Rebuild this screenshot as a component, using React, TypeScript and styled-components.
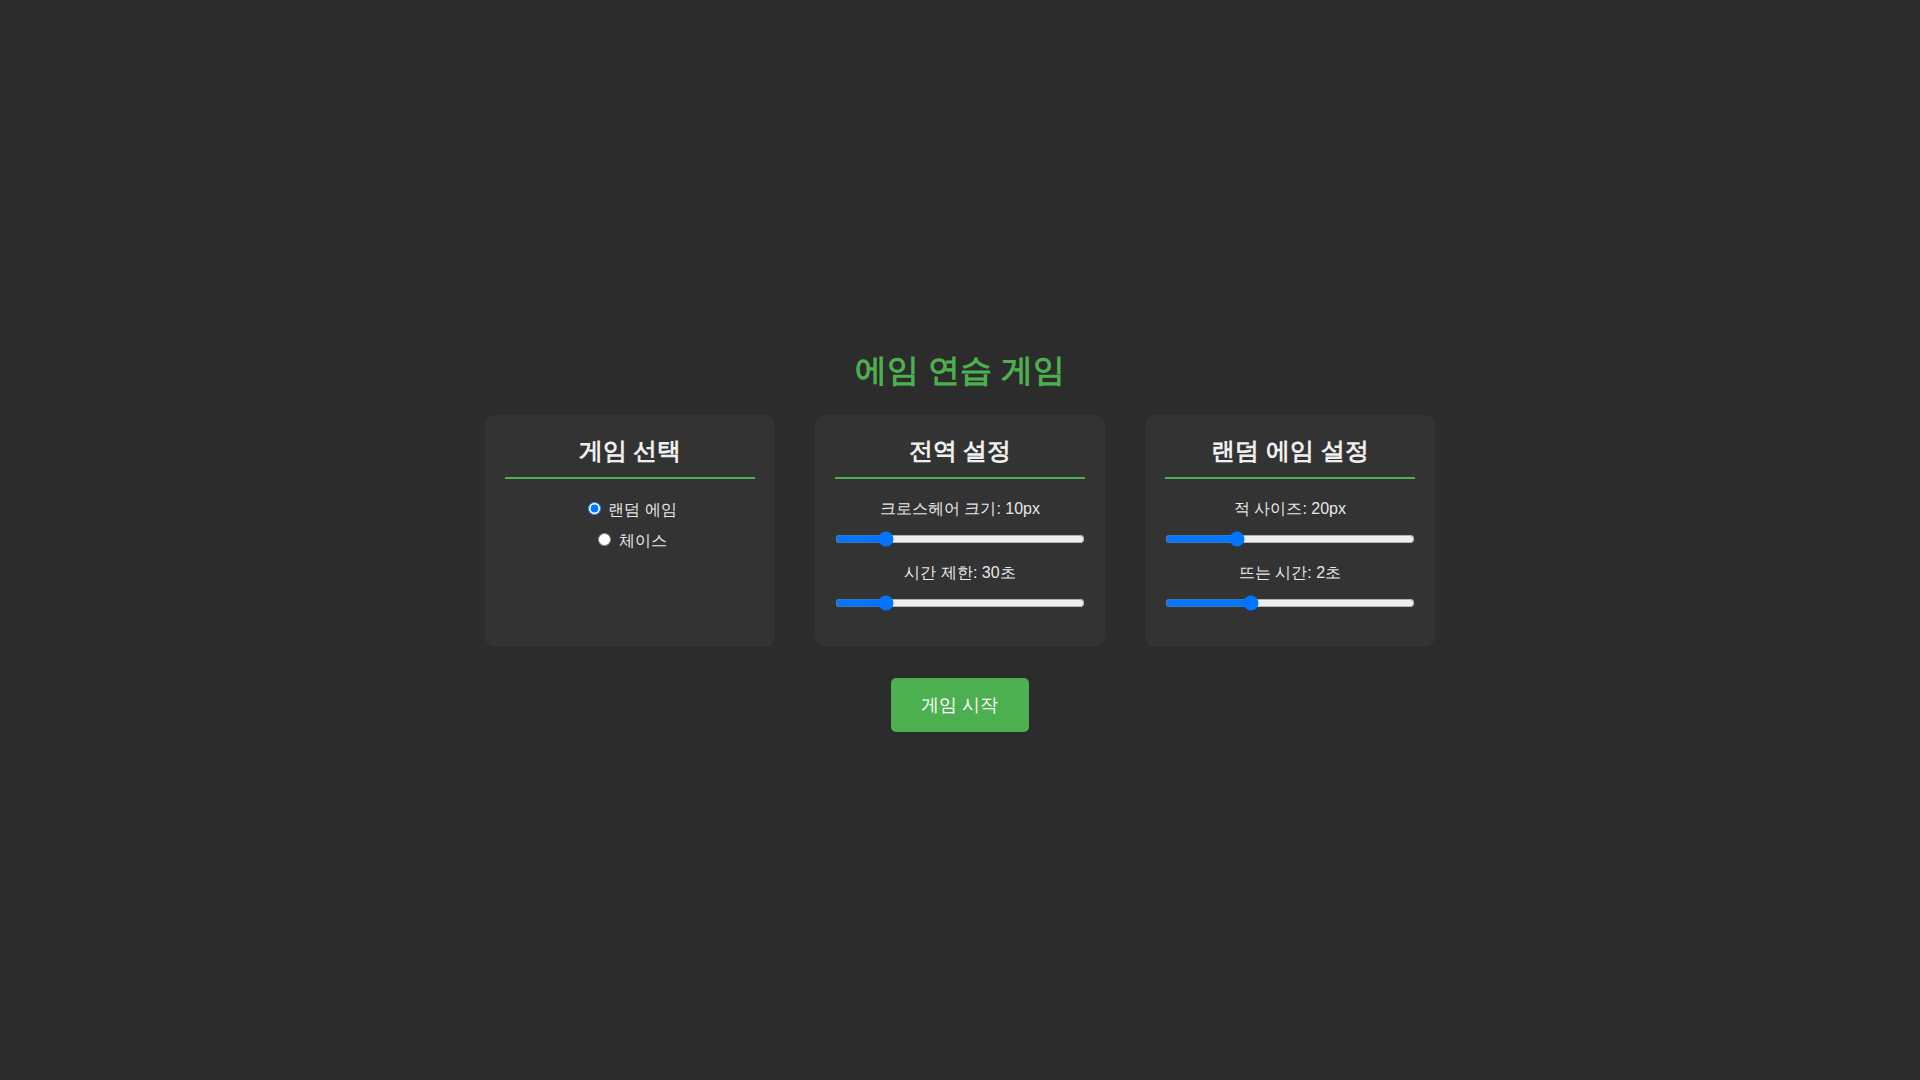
import { useState } from 'react';
import styled, { createGlobalStyle } from 'styled-components';

const GlobalStyle = createGlobalStyle`
  html, body {
    margin: 0;
    padding: 0;
    background: #2c2c2c;
    color: #f0f0f0;
    font-family: Arial, "Liberation Sans", sans-serif;
  }
`;

const Page = styled.div`
  min-height: 100vh;
  display: flex;
  flex-direction: column;
  align-items: center;
  justify-content: center;
`;

const Title = styled.h1`
  margin: 0 0 22px;
  font-size: 32px;
  font-weight: bold;
  color: #4caf50;
`;

const Panels = styled.div`
  display: flex;
  gap: 40px;
  align-items: stretch;
`;

const Panel = styled.section`
  width: 250px;
  padding: 20px;
  background: #333333;
  border-radius: 10px;
  text-align: center;
`;

const PanelTitle = styled.h2`
  margin: 0 0 20px;
  padding-bottom: 10px;
  font-size: 24px;
  font-weight: bold;
  color: #f0f0f0;
  border-bottom: 2px solid #4caf50;
`;

const RadioLabel = styled.label`
  display: block;
  margin-bottom: 9px;
  font-size: 16px;
  color: #e8e8e8;
  cursor: pointer;
`;

const SliderGroup = styled.div`
  margin-bottom: 16px;
`;

const SliderLabel = styled.label`
  display: block;
  margin-bottom: 11px;
  font-size: 16px;
  color: #e8e8e8;
`;

const Range = styled.input`
  display: block;
  width: 100%;
  margin: 2px 0;
`;

const StartButton = styled.button`
  margin-top: 31px;
  padding: 15px 30px;
  font-family: inherit;
  font-size: 18px;
  color: #ffffff;
  background: #4caf50;
  border: none;
  border-radius: 5px;
  cursor: pointer;
`;

type Slider = { key: string; label: string; unit: string; min: number; max: number; step: number; value: number };

const globalSliders: Slider[] = [
  { key: 'cross', label: '크로스헤어 크기', unit: 'px', min: 1, max: 50, step: 1, value: 10 },
  { key: 'time', label: '시간 제한', unit: '초', min: 10, max: 120, step: 1, value: 30 },
];

const randomSliders: Slider[] = [
  { key: 'size', label: '적 사이즈', unit: 'px', min: 5, max: 60, step: 1, value: 20 },
  { key: 'pop', label: '뜨는 시간', unit: '초', min: 0.5, max: 5, step: 0.5, value: 2 },
];

const SliderList = ({ items }: { items: Slider[] }) => {
  const [values, setValues] = useState(() => Object.fromEntries(items.map(s => [s.key, s.value])));
  return (
    <>
      {items.map(s => (
        <SliderGroup key={s.key}>
          <SliderLabel>{s.label}: {values[s.key]}{s.unit}</SliderLabel>
          <Range
            type="range"
            min={s.min}
            max={s.max}
            step={s.step}
            value={values[s.key]}
            onChange={e => setValues(v => ({ ...v, [s.key]: Number(e.target.value) }))}
          />
        </SliderGroup>
      ))}
    </>
  );
};

export default function App() {
  const [mode, setMode] = useState('random');

  return (
    <>
      <GlobalStyle />
      <Page>
        <Title>에임 연습 게임</Title>
        <Panels>
          <Panel>
            <PanelTitle>게임 선택</PanelTitle>
            <RadioLabel>
              <input type="radio" name="mode" checked={mode === 'random'} onChange={() => setMode('random')} /> 랜덤 에임
            </RadioLabel>
            <RadioLabel>
              <input type="radio" name="mode" checked={mode === 'chase'} onChange={() => setMode('chase')} /> 체이스
            </RadioLabel>
          </Panel>
          <Panel>
            <PanelTitle>전역 설정</PanelTitle>
            <SliderList items={globalSliders} />
          </Panel>
          <Panel>
            <PanelTitle>랜덤 에임 설정</PanelTitle>
            <SliderList items={randomSliders} />
          </Panel>
        </Panels>
        <StartButton>게임 시작</StartButton>
      </Page>
    </>
  );
}
